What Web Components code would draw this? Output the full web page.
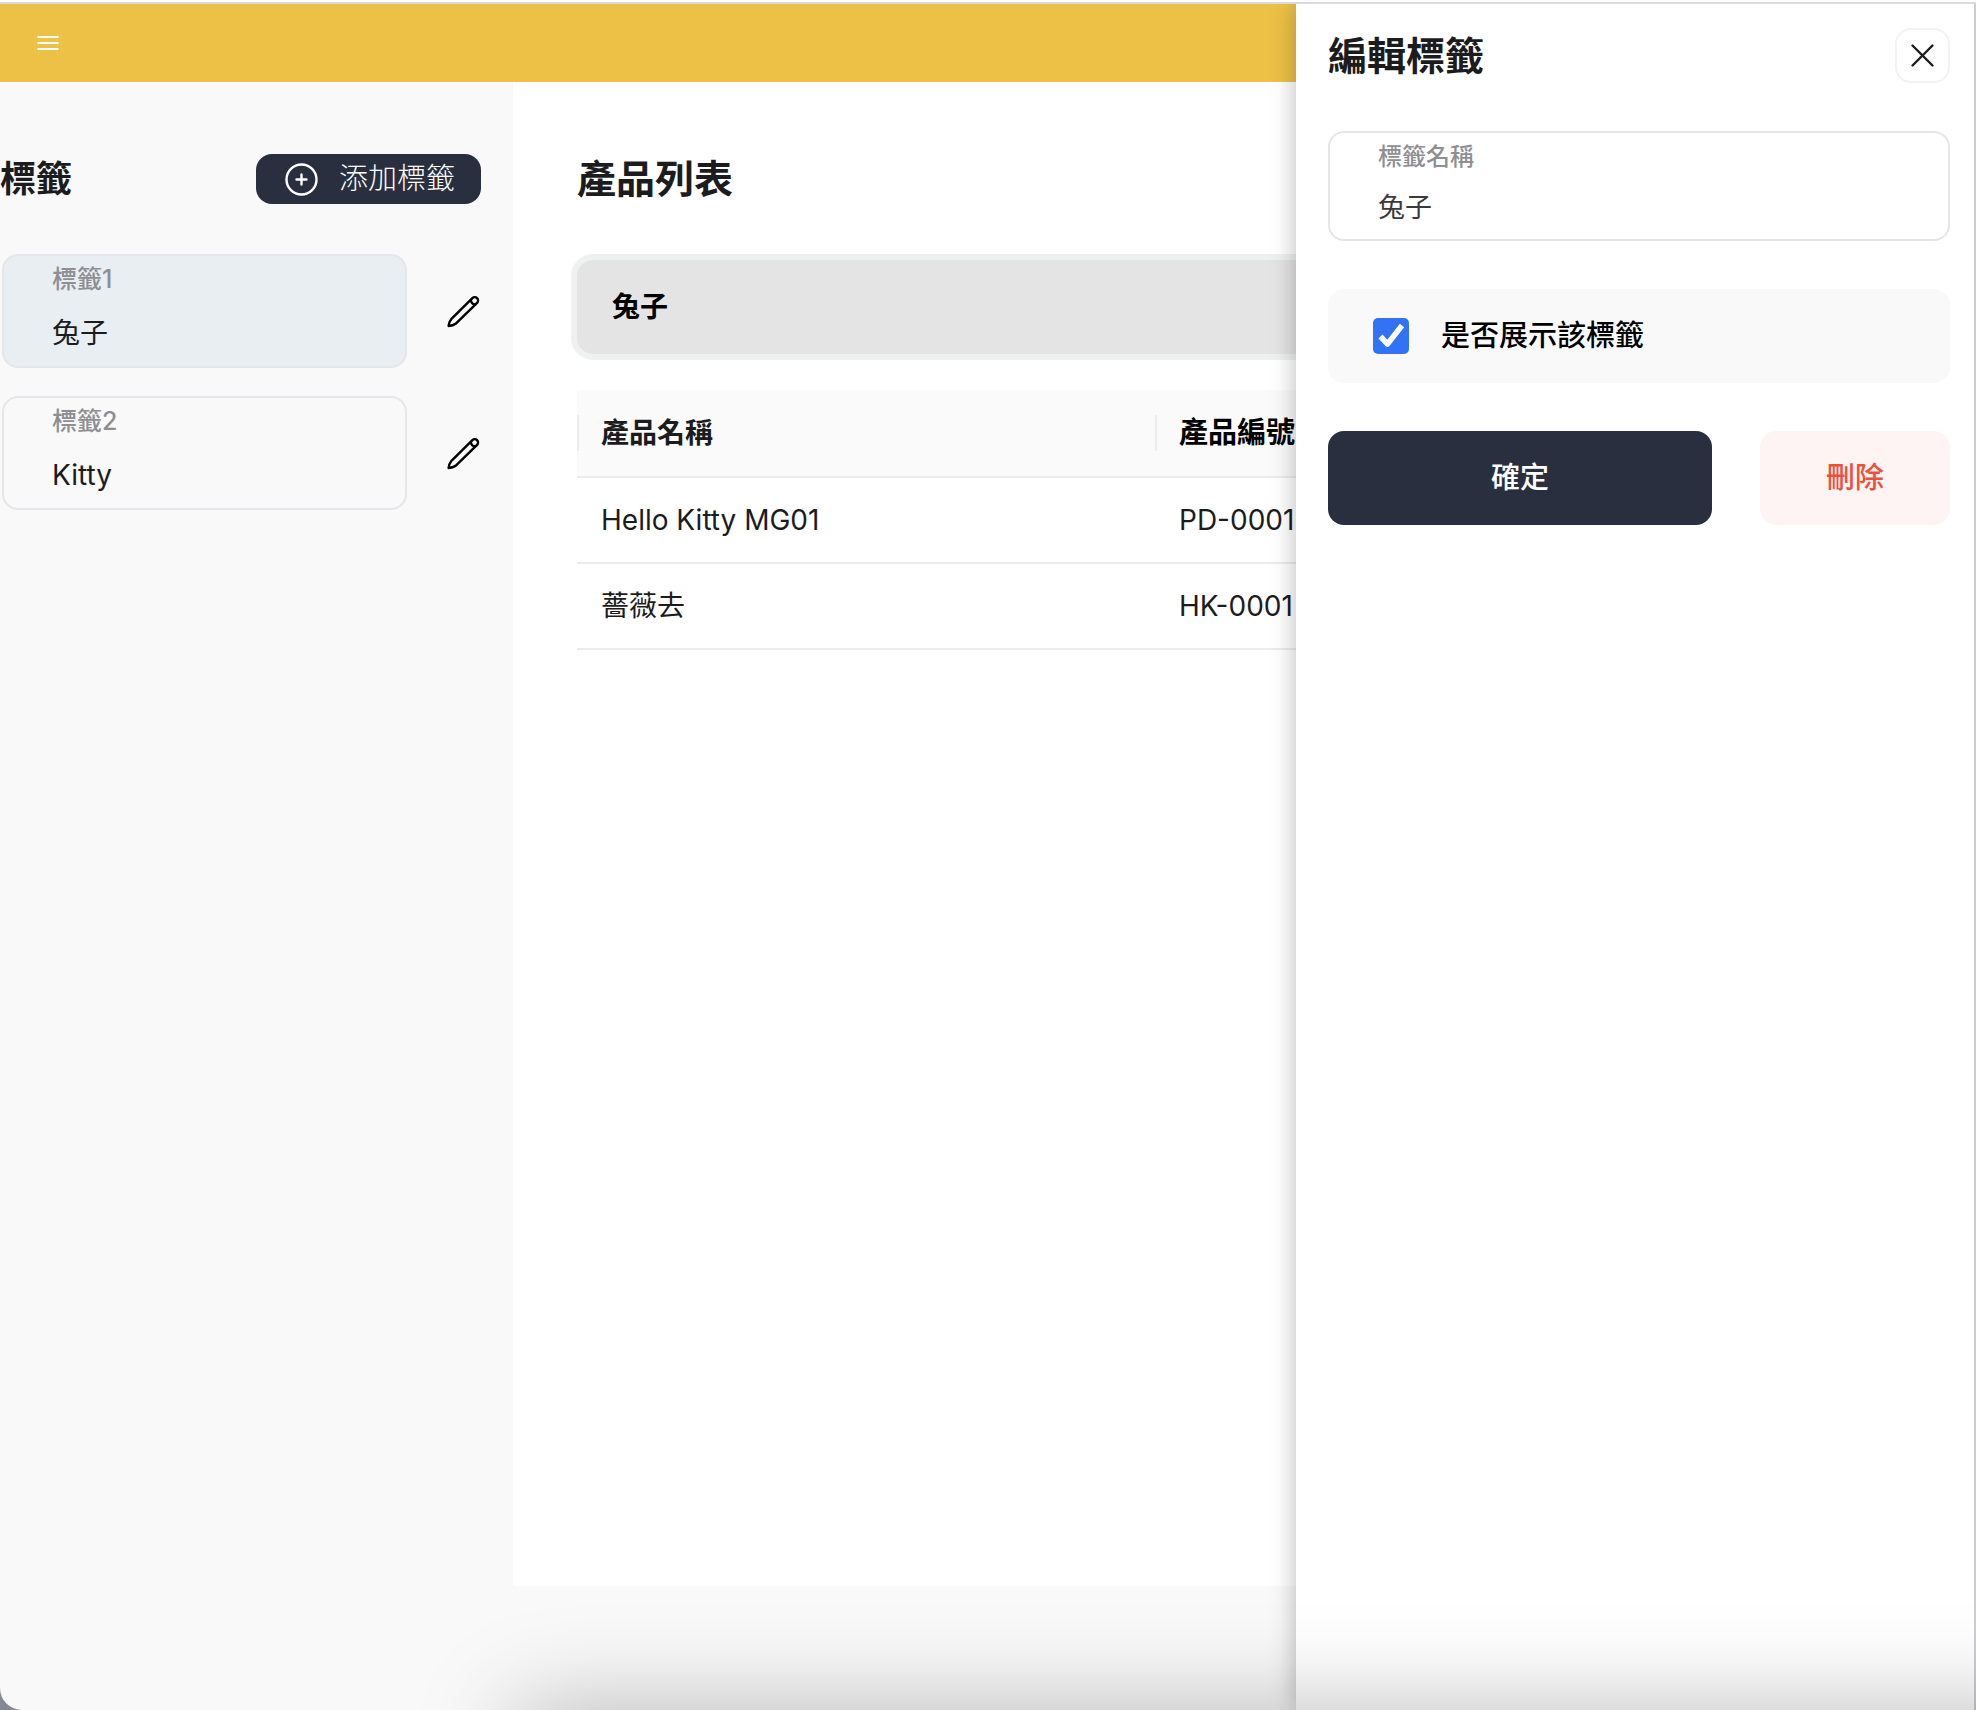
<!DOCTYPE html>
<html lang="zh-Hant">
<head>
<meta charset="utf-8">
<title>產品列表</title>
<style>
  html { background: #858894; }
  body {
    margin: 0;
    color: #1c1c1e;
    font-family: Inter, "Noto Sans CJK TC", sans-serif;
    font-size: 28px;
    line-height: 36px;
  }
</style>
</head>
<body>
<app-shell>
  <app-topbar slot="top"></app-topbar>
  <tag-sidebar slot="side">
    <tag-item selected><span slot="label">標籤1</span>兔子</tag-item>
    <tag-item><span slot="label">標籤2</span>Kitty</tag-item>
  </tag-sidebar>
  <product-panel slot="main">
    <span slot="filter">兔子</span>
    <product-table></product-table>
  </product-panel>
  <tag-drawer slot="drawer"></tag-drawer>
</app-shell>

<script>
const define = (name, html) => {
  const template = document.createElement('template');
  template.innerHTML = '<style>*{box-sizing:border-box}h2{margin:0}button{font:inherit;color:inherit;border:0;padding:0;background:none;cursor:pointer}svg{display:block}</style>' + html;
  customElements.define(name, class extends HTMLElement {
    constructor() {
      super();
      this.attachShadow({ mode: 'open' }).append(template.content.cloneNode(true));
    }
  });
};

define('app-shell', `
  <style>
    :host { display: flex; flex-direction: column; position: relative; box-sizing: border-box; min-height: 100vh;
      overflow: hidden; background: #f9f9f9; border-top: 2px solid #fff; border-bottom-left-radius: 22px; }
    .columns { flex: 1; display: flex; }
    .side { flex: none; width: 513px; }
    .main { flex: 1; min-width: 0; display: flex; padding-bottom: 124px; }
    .glow { position: absolute; left: 516px; right: -200px; top: 100%; height: 200px; box-shadow: 0 0 100px rgba(0,0,0,.27); pointer-events: none; }
  </style>
  <slot name="top"></slot>
  <div class="columns">
    <div class="side"><slot name="side"></slot></div>
    <div class="main"><slot name="main"></slot></div>
  </div>
  <slot name="drawer"></slot>
  <div class="glow"></div>
`);

define('app-topbar', `
  <style>
    :host { display: block; border-top: 2px solid #dbdbdf; }
    header { display: flex; align-items: center; height: 78px; padding-left: 36px; background: #edc146; }
  </style>
  <header>
    <button type="button" aria-label="選單">
      <svg width="24" height="24" viewBox="0 0 24 24" stroke="#fff" stroke-width="2" fill="none"><path d="M1.500 6h21M1.500 12h21M1.500 18h21"/></svg>
    </button>
  </header>
`);

define('tag-sidebar', `
  <style>
    :host { display: block; padding: 72px 32px 0 0; }
    .head { display: flex; justify-content: space-between; align-items: center; margin-bottom: 50px; }
    h2 { font-size: 36px; line-height: 50px; font-weight: 700; }
    button { display: flex; align-items: center; justify-content: space-between; width: 225px; height: 50px; padding: 0 26px 0 29px;
      border-radius: 16px; background: #292f3f; color: #fff; font-size: 29px; font-weight: 300; }
    .list { display: flex; flex-direction: column; gap: 28px; }
  </style>
  <div class="head">
    <h2>標籤</h2>
    <button type="button">
      <svg width="33" height="33" viewBox="0 0 33 33" fill="none" stroke="#fff" stroke-width="2.4" stroke-linecap="round"><circle cx="16.500" cy="16.500" r="15"/><path d="M16.500 11.500v10M11.500 16.500h10"/></svg>
      <span>添加標籤</span>
    </button>
  </div>
  <div class="list"><slot></slot></div>
`);

define('tag-item', `
  <style>
    :host { display: flex; align-items: center; gap: 40px; padding-left: 2px; }
    .card { flex: 1; display: flex; flex-direction: column; align-items: flex-start; gap: 20px; padding: 7px 48px 15px;
      border: 2px solid #e5e5ea; border-radius: 16px; text-align: left; }
    :host([selected]) .card { background: #e9eef2; }
    .label { color: #8e8e93; font-size: 25px; line-height: 32px; font-weight: 500; }
    .value { line-height: 36px; }
    .edit { width: 34px; height: 34px; }
  </style>
  <button class="card" type="button">
    <span class="label"><slot name="label"></slot></span>
    <span class="value"><slot></slot></span>
  </button>
  <button class="edit" type="button" aria-label="編輯">
    <svg width="34" height="34" viewBox="0 0 34 34" fill="none" stroke="#000" stroke-width="2.400" stroke-linejoin="round"><path d="M1.600 32C2 28.600 2.800 26.800 4.200 25.200L25.400 4.200a3.300 3.300 0 0 1 4.700 4.700L8.600 29.800C6.800 31.200 5 31.800 1.600 32Z"/><path d="M24 5.600c-.6 2.600 2 5.100 4.800 4.600"/></svg>
  </button>
`);

define('product-panel', `
  <style>
    :host { flex: 1; display: block; padding: 72px 64px 0; background: #fff; }
    h2 { font-size: 39px; line-height: 50px; font-weight: 700; }
    .filter { margin: 56px 0 36px; padding: 29px 35px; border-radius: 16px; background: #e4e4e4; box-shadow: 0 0 0 6px #eff1f0;
      color: #000; font-weight: 700; }
  </style>
  <h2>產品列表</h2>
  <div class="filter"><slot name="filter"></slot></div>
  <slot></slot>
`);

define('product-table', `
  <style>
    :host { display: block; }
    table { width: 100%; border-collapse: separate; border-spacing: 0; table-layout: fixed; }
    col.name { width: 578px; }
    th, td { padding: 24px; border-bottom: 2px solid #ececee; text-align: left; font-weight: 400; }
    th { padding: 25px 0; background: #fafafa; font-weight: 700; }
    th span { display: block; padding-left: 22px; border-left: 2px solid #ececee; }
    th.code { color: #000; font-size: 29px; }
  </style>
  <table>
    <colgroup><col class="name"><col></colgroup>
    <thead><tr><th scope="col"><span>產品名稱</span></th><th class="code" scope="col"><span>產品編號</span></th></tr></thead>
    <tbody>
      <tr><td>Hello Kitty MG01</td><td>PD-0001</td></tr>
      <tr><td>薔薇去</td><td>HK-0001</td></tr>
    </tbody>
  </table>
`);

define('tag-drawer', `
  <style>
    :host { position: absolute; top: 2px; right: 0; bottom: 0; width: 680px; box-sizing: border-box; display: block;
      background: #fff; border-right: 2px solid #cdcdd2; box-shadow: 0 0 24px rgba(0,0,0,.28); clip-path: inset(0 0 0 -40px); }
    form { display: flex; flex-direction: column; gap: 48px; padding: 24px 24px 0 32px; }
    .head { display: flex; justify-content: space-between; align-items: center; }
    h2 { font-size: 39px; line-height: 50px; font-weight: 700; }
    .close { display: grid; place-items: center; width: 55px; height: 55px; border: 2px solid #f2f2f7; border-radius: 16px; }
    .field { display: flex; flex-direction: column; gap: 17px; padding: 8px 48px 13px; border: 2px solid #e5e5ea; border-radius: 16px; }
    .field label { color: #8e8e93; font-size: 24px; line-height: 32px; font-weight: 500; }
    .field input { width: 100%; height: 36px; padding: 0; border: 0; outline: 0; background: none; color: #3a3a3c; font: inherit; font-size: 27px; }
    .check { display: flex; align-items: center; gap: 32px; height: 94px; padding: 0 45px; border-radius: 16px; background: #f9f9f9; color: #000; font-size: 29px; font-weight: 500; }
    .box { display: grid; width: 36px; height: 36px; }
    .box > * { grid-area: 1 / 1; margin: 0; }
    .box input { appearance: none; width: 36px; height: 36px; border: 2px solid #c7c7cc; border-radius: 5px; }
    .box input:checked { border: 0; background: #3273f6; }
    .box svg { pointer-events: none; z-index: 1; visibility: hidden; }
    .box input:checked + svg { visibility: visible; }
    .actions { display: flex; gap: 48px; font-size: 29px; font-weight: 500; }
    .actions button { height: 94px; border-radius: 16px; }
    .ok { flex: 1; background: #292f3f; color: #fff; }
    .delete { width: 190px; background: #fdf4f3; color: #ee4f3a; }
  </style>
  <form>
    <div class="head">
      <h2>編輯標籤</h2>
      <button class="close" type="button" aria-label="關閉">
        <svg width="25" height="25" viewBox="0 0 25 25" fill="none" stroke="#1c1c1e" stroke-width="2.400" stroke-linecap="round"><path d="M2.500 2.500l20 20M22.500 2.500l-20 20"/></svg>
      </button>
    </div>
    <div class="field">
      <label for="name">標籤名稱</label>
      <input id="name" type="text" value="兔子">
    </div>
    <div class="check">
      <span class="box">
        <input id="show" type="checkbox" checked>
        <svg width="36" height="36" viewBox="0 0 36 36" fill="none" stroke="#fff" stroke-width="5.500" stroke-linejoin="round"><path d="M7.500 18.500 14.500 26 29 7.500"/></svg>
      </span>
      <label for="show">是否展示該標籤</label>
    </div>
    <div class="actions">
      <button class="ok" type="button">確定</button>
      <button class="delete" type="button">刪除</button>
    </div>
  </form>
`);
</script>
</body>
</html>
